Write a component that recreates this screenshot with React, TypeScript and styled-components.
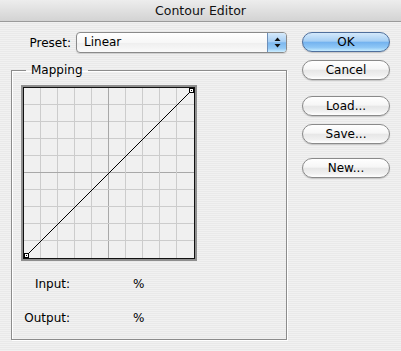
import styled, { createGlobalStyle } from 'styled-components';

const GlobalStyle = createGlobalStyle`
  html, body {
    margin: 0;
    padding: 0;
  }
  body {
    font-family: "DejaVu Sans", "Liberation Sans", sans-serif;
    font-size: 12px;
    color: #000;
    background: #ededed;
  }
`;

const Window = styled.div`
  width: 401px;
  height: 351px;
  overflow: hidden;
  display: flex;
  flex-direction: column;
  background: repeating-linear-gradient(to bottom, #f1f1f1 0 1px, #e9e9e9 1px 2px);
`;

const TitleBar = styled.div`
  flex: none;
  height: 21px;
  display: flex;
  align-items: center;
  justify-content: center;
  background: linear-gradient(to bottom, #ededed, #d3d3d3);
  border-bottom: 1px solid #9a9a9a;
  font-size: 12.5px;
  color: #111;
`;

const Body = styled.div`
  display: flex;
  gap: 15px;
  padding-top: 10px;
`;

const LeftColumn = styled.div`
  width: 287px;
  display: flex;
  flex-direction: column;
`;

const PresetRow = styled.div`
  display: flex;
  align-items: center;
  gap: 5px;
  height: 21px;
`;

const FieldLabel = styled.span<{ $width: number }>`
  width: ${({ $width }) => $width}px;
  text-align: right;
  line-height: 14px;
  white-space: nowrap;
`;

const Select = styled.div`
  width: 211px;
  height: 21px;
  box-sizing: border-box;
  display: flex;
  border: 1px solid #8a8a8a;
  border-radius: 4px;
  overflow: hidden;
  background: linear-gradient(to bottom, #ffffff 0%, #f7f7f7 50%, #eeeeee 51%, #fafafa 100%);
  box-shadow: 0 1px 1px rgba(0, 0, 0, 0.12);
`;

const SelectValue = styled.span`
  flex: 1;
  padding-left: 7px;
  line-height: 19px;
`;

const SelectArrows = styled.span`
  width: 18px;
  display: flex;
  align-items: center;
  justify-content: center;
  border-left: 1px solid #6e8fb8;
  background: linear-gradient(to bottom, #d6eafb 0%, #a8cff4 45%, #7db8ef 52%, #93c9f6 80%, #cdeeff 100%);
`;

const GroupBox = styled.fieldset`
  margin: 10px 0 0 11px;
  padding: 0;
  width: 276px;
  height: 277px;
  box-sizing: border-box;
  min-width: 0;
  border: 1px solid #8c8c8c;
  box-shadow: 1px 1px 0 #ffffff, inset 1px 1px 0 #ffffff;
`;

const GroupLegend = styled.legend`
  margin-left: 14px;
  padding: 0 5px;
  line-height: 14px;
  font-size: 12px;
`;

const GroupContent = styled.div`
  padding: 8px 0 0 9px;
`;

const Graph = styled.div`
  width: 176px;
  height: 176px;
  box-sizing: border-box;
  border: 2px solid #8e8e8e;
`;

const Plot = styled.div`
  border: 1px solid #111;
  background: #f0f0f0;
  line-height: 0;
`;

const ReadoutRow = styled.div<{ $top: number }>`
  display: grid;
  grid-template-columns: 49px 63px auto;
  margin-top: ${({ $top }) => $top}px;
  line-height: 14px;
`;

const ButtonColumn = styled.div`
  width: 88px;
  display: flex;
  flex-direction: column;
`;

const AquaButton = styled.button<{ $primary?: boolean; $gap?: number }>`
  width: 88px;
  height: 20px;
  box-sizing: border-box;
  margin: ${({ $gap }) => $gap ?? 0}px 0 0 0;
  padding: 0;
  border-radius: 10px;
  border: 1px solid ${({ $primary }) => ($primary ? '#4f6f9c' : '#8a8a8a')};
  background: ${({ $primary }) =>
    $primary
      ? 'linear-gradient(to bottom, #d4e9fb 0%, #a6cff4 45%, #74b3ef 52%, #8ec7f6 80%, #c6ecff 100%)'
      : 'linear-gradient(to bottom, #ffffff 0%, #f6f6f6 45%, #e7e7e7 52%, #f0f0f0 80%, #ffffff 100%)'};
  box-shadow: 0 1px 1px rgba(0, 0, 0, 0.18);
  font-family: "DejaVu Sans", "Liberation Sans", sans-serif;
  font-size: 12px;
  line-height: 18px;
  color: #000;
`;

const gridSteps = [1, 2, 3, 4, 5, 6, 7, 8, 9];

function ContourGraph() {
  return (
    <svg width="170" height="170" viewBox="0 0 170 170" shapeRendering="crispEdges">
      {gridSteps.map((i) => (
        <g key={i} stroke={i === 5 ? '#a8a8a8' : '#cccccc'} strokeWidth="1">
          <line x1={i * 17 - 0.5} y1="0" x2={i * 17 - 0.5} y2="170" />
          <line x1="0" y1={i * 17 - 0.5} x2="170" y2={i * 17 - 0.5} />
        </g>
      ))}
      <line x1="1" y1="169" x2="169" y2="1" stroke="#000" strokeWidth="1" shapeRendering="auto" />
      <rect x="0.5" y="165.5" width="4" height="4" fill="#fff" stroke="#000" />
      <rect x="2" y="167" width="1" height="1" fill="#000" />
      <rect x="165.5" y="0.5" width="4" height="4" fill="#fff" stroke="#000" />
      <rect x="167" y="2" width="1" height="1" fill="#000" />
    </svg>
  );
}

function UpDownArrows() {
  return (
    <svg width="7" height="11" viewBox="0 0 7 11">
      <path d="M3.5 0.5 L6.5 4 L0.5 4 Z" fill="#111" />
      <path d="M0.5 7 L6.5 7 L3.5 10.5 Z" fill="#111" />
    </svg>
  );
}

export default function App() {
  return (
    <>
      <GlobalStyle />
      <Window>
        <TitleBar>Contour Editor</TitleBar>
        <Body>
          <LeftColumn>
            <PresetRow>
              <FieldLabel $width={71}>Preset:</FieldLabel>
              <Select>
                <SelectValue>Linear</SelectValue>
                <SelectArrows>
                  <UpDownArrows />
                </SelectArrows>
              </Select>
            </PresetRow>
            <GroupBox>
              <GroupLegend>Mapping</GroupLegend>
              <GroupContent>
                <Graph>
                  <Plot>
                    <ContourGraph />
                  </Plot>
                </Graph>
                <ReadoutRow $top={16}>
                  <FieldLabel $width={49}>Input:</FieldLabel>
                  <span />
                  <span>%</span>
                </ReadoutRow>
                <ReadoutRow $top={20}>
                  <FieldLabel $width={49}>Output:</FieldLabel>
                  <span />
                  <span>%</span>
                </ReadoutRow>
              </GroupContent>
            </GroupBox>
          </LeftColumn>
          <ButtonColumn>
            <AquaButton $primary>OK</AquaButton>
            <AquaButton $gap={8}>Cancel</AquaButton>
            <AquaButton $gap={16}>Load...</AquaButton>
            <AquaButton $gap={8}>Save...</AquaButton>
            <AquaButton $gap={14}>New...</AquaButton>
          </ButtonColumn>
        </Body>
      </Window>
    </>
  );
}
